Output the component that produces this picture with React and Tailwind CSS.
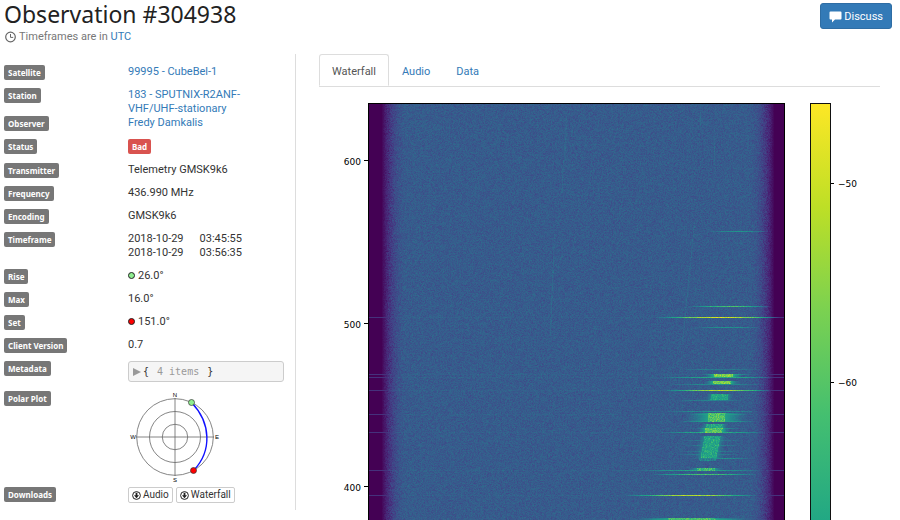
import React, { useEffect, useRef } from "react";

const VIRIDIS = [
  [68, 1, 84], [72, 36, 117], [65, 68, 135], [53, 95, 141], [42, 120, 142],
  [33, 145, 140], [34, 168, 132], [68, 191, 112], [122, 209, 81], [189, 223, 38], [253, 231, 37],
];

function viridis(value) {
  const t = Math.max(0, Math.min(0.9999, value)) * 10;
  const i = Math.floor(t);
  const f = t - i;
  return VIRIDIS[i].map((c, k) => c + (VIRIDIS[i + 1][k] - c) * f);
}

const PLOT_W = 415;
const PLOT_H = 1040;

// Horizontal bursts: [row, start, end, peak level, crosses the whole band]
const BURSTS = [
  [127, 338, 400, 0.5, 0], [202, 318, 402, 0.7, 0], [213, 286, 416, 0.9, 1],
  [223, 324, 392, 0.5, 0], [265, 310, 392, 0.42, 0], [270, 330, 384, 0.5, 1], [273, 290, 408, 0.6, 1],
  [280, 298, 396, 0.48, 0], [286, 294, 404, 0.86, 1], [296, 306, 376, 0.44, 0],
  [307, 296, 392, 0.5, 0], [310, 320, 380, 0.5, 1], [317, 308, 388, 0.56, 0], [324, 322, 376, 0.44, 0],
  [328, 288, 398, 0.6, 1], [336, 312, 374, 0.42, 0], [341, 312, 374, 0.42, 0], [347, 308, 372, 0.42, 0],
  [350, 306, 370, 0.44, 0], [354, 318, 386, 0.5, 0], [366, 268, 392, 0.56, 1],
  [370, 280, 390, 0.7, 0], [391, 256, 388, 0.86, 1], [415, 274, 374, 0.7, 0],
];

// Packets: [top, bottom, left, width, level, drift per row, halo]
const PACKETS = [
  [270, 272, 345, 18, 0.8, 0, 5], [277, 279, 344, 17, 0.78, 0, 5],
  [290, 295, 342, 17, 0.58, -0.2, 3], [309, 317, 339, 17, 0.72, -0.1, 12],
  [320, 323, 337, 17, 0.6, -0.2, 3], [324, 328, 336, 17, 0.75, -0.1, 4],
  [332, 353, 335, 16, 0.59, -0.19, 3], [354, 356, 330, 16, 0.44, 0, 3],
  [364, 366, 328, 17, 0.68, 0, 5], [414, 417, 299, 46, 0.7, 0, 20],
];

// Faint carriers drifting through the band: [top, bottom, x, drift per row]
const CARRIERS = [[0, 24, 331, 0], [12, 56, 197, -0.05], [56, 90, 194, -0.05], [118, 240, 325, -0.1], [128, 230, 185, -0.04], [24, 60, 345, 0]];

function ramp(distance, length) {
  const t = Math.min(1, Math.max(0, distance / length));
  return 1 - (1 - t) ** 2;
}

function paintWaterfall(canvas) {
  const ctx = canvas.getContext("2d");
  const image = ctx.createImageData(PLOT_W, PLOT_H);
  let seed = 304938;
  const random = () => {
    seed = (seed * 1664525 + 1013904223) >>> 0;
    return seed / 4294967296;
  };
  for (let y = 0; y < PLOT_H; y++) {
    const bursts = BURSTS.filter((b) => b[0] === y);
    const packets = PACKETS.filter((p) => y >= p[0] && y <= p[1]);
    const carriers = CARRIERS.filter((c) => y >= c[0] && y <= c[1]);
    for (let x = 0; x < PLOT_W; x++) {
      const edge = Math.min(ramp(x - 12, 26), ramp(PLOT_W - 10 - x, 26));
      const noise = random() + random() + random() - 1.5;
      let v = 0.286 * edge + noise * 0.055 * Math.min(1, edge * 2);
      carriers.forEach((c) => {
        if (Math.abs(x - (c[2] + (y - c[0]) * c[3])) < 0.6) v += 0.04;
      });
      bursts.forEach(([, from, to, peak, wide]) => {
        const d = Math.min(1, Math.abs(x - (from + to) / 2) / ((to - from) / 2));
        const shape = (1 - d ** 2) ** 1.2;
        v = Math.max(v, v + (peak - v) * shape + noise * 0.06 * shape);
        if (wide) v = Math.max(v + 0.02, 0.14);
      });
      packets.forEach(([top, , start, width, level, drift, halo]) => {
        const l = start + (y - top) * drift;
        const out = Math.max(l - x, x - l - width, 0);
        if (out === 0) v = Math.max(v, level + noise * 0.1);
        else if (out < halo * 2) v = Math.max(v, v + (level - 0.15 - v) * (1 - out / (halo * 2)) ** 1.5);
      });
      const rgb = viridis(v);
      const at = (y * PLOT_W + x) * 4;
      image.data[at] = rgb[0];
      image.data[at + 1] = rgb[1];
      image.data[at + 2] = rgb[2];
      image.data[at + 3] = 255;
    }
  }
  ctx.putImageData(image, 0, 0);
}

function Waterfall() {
  const ref = useRef(null);
  useEffect(() => paintWaterfall(ref.current), []);
  return (
    <div className="flex items-start pt-4">
      <svg width="49" height="420" className="shrink-0" fontFamily="'DejaVu Sans', sans-serif" fontSize="9" textAnchor="end">
        {[["600", 58], ["500", 221], ["400", 384]].map(([label, y]) => (
          <g key={label}>
            <text x="42" y={y + 4}>{label}</text>
            <path d={`M45 ${y - 0.5}h4`} stroke="#000" />
          </g>
        ))}
      </svg>
      <canvas ref={ref} width={PLOT_W} height={PLOT_H} className="h-[1042px] min-w-0 flex-1 border border-black" />
      <svg width="71" height="1042" className="ml-6 shrink-0" fontFamily="'DejaVu Sans', sans-serif" fontSize="9">
        <defs>
          <linearGradient id="scale" x1="0" y1="0" x2="0" y2="1">
            {[...VIRIDIS].reverse().map((c, i) => (
              <stop key={i} offset={i / 10} stopColor={`rgb(${c.join(",")})`} />
            ))}
          </linearGradient>
        </defs>
        <rect x="1.5" y="0.5" width="20" height="1041" fill="url(#scale)" stroke="#111" />
        {[["−50", 81], ["−60", 280]].map(([label, y]) => (
          <g key={label}>
            <path d={`M22 ${y - 0.5}h3`} stroke="#000" />
            <text x="29" y={y + 3}>{label}</text>
          </g>
        ))}
      </svg>
    </div>
  );
}

function PolarPlot() {
  return (
    <svg width="94" height="92" className="block" role="img" aria-label="Polar plot">
      <g fill="none" stroke="#666" strokeWidth="0.8">
        <circle cx="47" cy="46" r="38.3" />
        <circle cx="47" cy="46" r="25.5" />
        <circle cx="47" cy="46" r="12.7" />
        <path d="M47 7v78M8 46h78" />
      </g>
      <g fontFamily="'Liberation Sans', sans-serif" fontSize="6" textAnchor="middle" fill="#000">
        <text x="47" y="6">N</text>
        <text x="47" y="91">S</text>
        <text x="5" y="48">W</text>
        <text x="89" y="48">E</text>
      </g>
      <path d="M64 12C83 32 84 60 66 79" fill="none" stroke="#1010ff" strokeWidth="1.4" />
      <circle cx="63.5" cy="11.5" r="3" fill="#90ee90" stroke="#333" strokeWidth="0.7" />
      <circle cx="65.5" cy="79.5" r="3" fill="#f00" stroke="#333" strokeWidth="0.7" />
    </svg>
  );
}

function Dot({ fill }) {
  return (
    <svg width="7" height="7" className="mr-[3px] inline-block align-baseline">
      <circle cx="3.5" cy="3.5" r="3" fill={fill} stroke="#222" />
    </svg>
  );
}

function DownloadIcon() {
  return (
    <svg width="9" height="9" viewBox="0 0 18 18" className="shrink-0">
      <circle cx="9" cy="9" r="7.8" fill="none" stroke="#222" strokeWidth="2" />
      <path d="M7.2 3.5h3.6v5H14l-5 6-5-6h3.2z" fill="#222" />
    </svg>
  );
}

const badge = "h-[15px] rounded-[2px] px-1 font-['Noto_Sans',sans-serif] text-[8px] leading-[15px] font-bold text-white";

function Row({ label, children, className = "pb-[9px]" }) {
  return (
    <div className={`flex items-start ${className}`}>
      <dt className="flex w-[124px] shrink-0">
        <span className={`-mb-px bg-[#777] ${badge}`}>{label}</span>
      </dt>
      <dd className="min-w-0 flex-1">{children}</dd>
    </div>
  );
}

const link = "text-[#337ab7] hover:underline";
const download = "flex h-4 items-center gap-[2px] rounded-[2px] border border-[#ccc] bg-white px-[3px] text-[10px] leading-[14px] text-[#333]";

export default function App() {
  return (
    <div className="h-screen overflow-hidden bg-white pl-1 font-[Roboto,sans-serif] text-[11px] leading-[14px] text-[#333]">
      <header className="flex items-start justify-between pr-2">
        <div>
          <h1 className="font-['Noto_Sans',sans-serif] text-[23px] leading-[28px] text-[#222]">Observation #304938</h1>
          <p className="mt-0.5 flex items-center gap-[3px] text-[#777]">
            <svg width="12" height="12" viewBox="0 0 12 12" fill="none" stroke="#666">
              <circle cx="6.5" cy="6" r="4.8" strokeWidth="1.2" />
              <path d="M6.5 3v3.4h2.7" />
            </svg>
            <span>Timeframes are in <a href="#utc" className={link}>UTC</a></span>
          </p>
        </div>
        <button type="button" className="mt-[3px] flex h-[26px] items-center gap-0.5 rounded-[3px] border border-[#2e6da4] bg-[#337ab7] px-2 pt-px text-[11px] text-white">
          <svg width="13" height="12" viewBox="0 0 13 12"><path d="M1.5 .5h10a1 1 0 0 1 1 1v6a1 1 0 0 1-1 1H6l-3 3v-3H1.5a1 1 0 0 1-1-1v-6a1 1 0 0 1 1-1z" fill="#fff" /></svg>
          Discuss
        </button>
      </header>

      <main className="flex items-start pt-[10px]">
        <dl className="w-[292px] shrink-0 border-r border-[#ddd] pt-[11px] pr-[11px] pb-[7px]">
          <Row label="Satellite"><a href="#satellite" className={link}>99995 - CubeBel-1</a></Row>
          <Row label="Station" className="">
            <a href="#station" className={link}>183 - SPUTNIX-R2ANF-<br />VHF/UHF-stationary</a>
          </Row>
          <Row label="Observer"><a href="#observer" className={link}>Fredy Damkalis</a></Row>
          <Row label="Status">
            <span className={`block w-fit bg-[#d9534f] ${badge}`}>Bad</span>
          </Row>
          <Row label="Transmitter">Telemetry GMSK9k6</Row>
          <Row label="Frequency">436.990 MHz</Row>
          <Row label="Encoding">GMSK9k6</Row>
          <Row label="Timeframe">
            <div className="flex gap-4"><span>2018-10-29</span><span>03:45:55</span></div>
            <div className="flex gap-4"><span>2018-10-29</span><span>03:56:35</span></div>
          </Row>
          <Row label="Rise"><Dot fill="#90ee90" />26.0°</Row>
          <Row label="Max">16.0°</Row>
          <Row label="Set"><Dot fill="#f00" />151.0°</Row>
          <Row label="Client Version">0.7</Row>
          <Row label="Metadata">
            <button type="button" className="flex h-[21px] w-full items-center rounded-[3px] border border-[#ccc] bg-[#f5f5f5] pl-1 font-['DejaVu_Sans_Mono',monospace] text-[10px]">
              <svg width="8" height="8" className="mr-0.5"><path d="M0 0l8 4-8 4z" fill="#999" /></svg>
              <span>{"{"}</span>
              <span className="mx-2 text-[#999]">4 items</span>
              <span>{"}"}</span>
            </button>
          </Row>
          <Row label="Polar Plot" className="pb-1"><PolarPlot /></Row>
          <Row label="Downloads" className="">
            <div className="flex gap-[3px]">
              <a href="#audio-file" className={download}><DownloadIcon />Audio</a>
              <a href="#waterfall-file" className={download}><DownloadIcon />Waterfall</a>
            </div>
          </Row>
        </dl>

        <section className="mr-5 ml-[23px] min-w-0 flex-1">
          <div role="tablist" className="flex border-b border-[#ddd] text-[#337ab7]">
            <button type="button" role="tab" aria-selected="true" className="-mb-px h-8 rounded-t-[3px] border border-[#ddd] border-b-white bg-white px-3 pt-[3px] text-[#555]">Waterfall</button>
            <button type="button" role="tab" aria-selected="false" className="h-8 px-[13px] pt-[3px]">Audio</button>
            <button type="button" role="tab" aria-selected="false" className="h-8 px-[13px] pt-[3px]">Data</button>
          </div>
          <Waterfall />
        </section>
      </main>
    </div>
  );
}
